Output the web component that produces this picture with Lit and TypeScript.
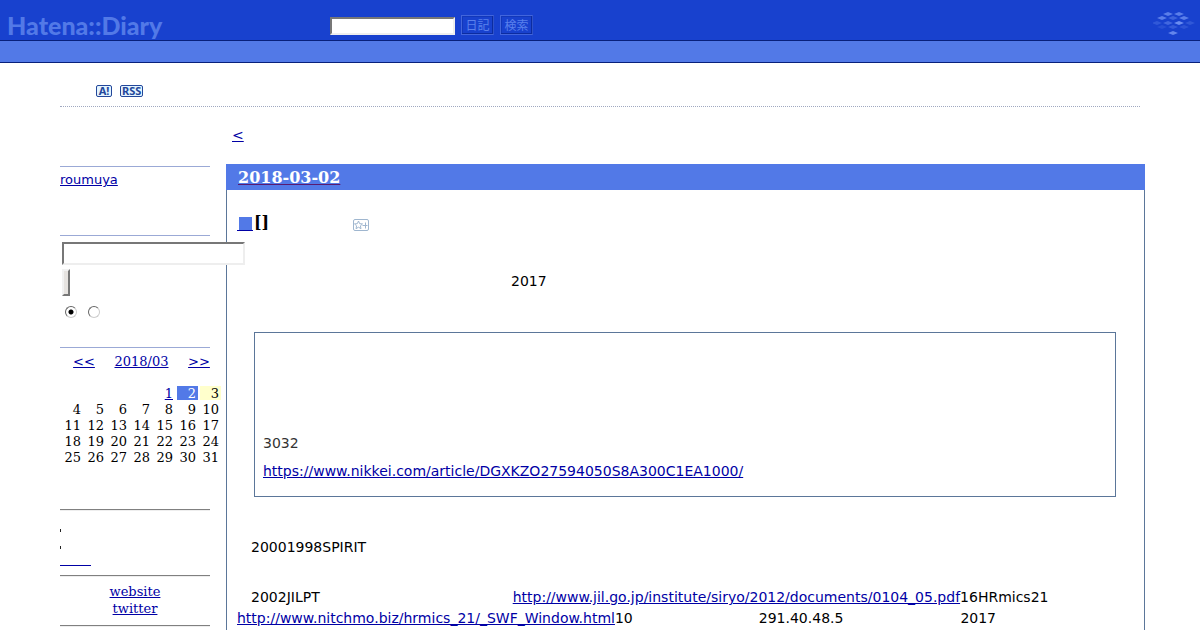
import { LitElement, html, css, svg } from "lit";
import { customElement } from "lit/decorators.js";

const blank = (width: number) => html`<span class="blank" style="width:${width}px"></span>`;

const weeks: number[][] = [
  [0, 0, 0, 0, 1, 2, 3],
  [4, 5, 6, 7, 8, 9, 10],
  [11, 12, 13, 14, 15, 16, 17],
  [18, 19, 20, 21, 22, 23, 24],
  [25, 26, 27, 28, 29, 30, 31],
];

@customElement("diary-header")
class DiaryHeader extends LitElement {
  static styles = css`
    :host { display: block; }
    .bar {
      display: flex;
      align-items: center;
      height: 40px;
      background: #1841ce;
      border-bottom: 1px solid #08207b;
    }
    .logo {
      width: 322px;
      padding: 10px 0 0 7px;
      box-sizing: border-box;
      margin-right: 8px;
      font: 900 25px/30px Lato, sans-serif;
      color: #5279e7;
      text-decoration: none;
    }
    .search { display: flex; align-items: center; gap: 6px; flex: 1; padding-top: 9px; }
    .word {
      box-sizing: border-box;
      width: 125px;
      height: 18px;
      margin: 2px 0 0;
      padding: 0 2px;
      border: 2px solid;
      border-color: #777 #eee #eee #777;
      background: #fff;
      border-radius: 0;
    }
    .go {
      box-sizing: border-box;
      width: 33px;
      height: 20px;
      padding: 0;
      border: 1px solid;
      border-color: #4265dc #3052c8 #4265dc #4265dc;
      box-shadow: inset -1px -1px #0c2ca0, inset 1px 1px #1238ba;
      border-radius: 0;
      background: #1841ce;
      color: #5a80ec;
      font: 12px/15px "Noto Sans CJK JP", sans-serif;
    }
    .mark { margin: 6px 5px 0 0; display: block; }
    .sub { height: 21px; background: #5279e7; border-bottom: 1px solid #08207b; }
  `;
  render() {
    const tiles: [number, number, number][] = [
      [15, 5, 0.8], [26, 5, 0.8],
      [9, 9, 0.8], [20, 9, 0.45], [31, 9, 0.8],
      [4, 14, 0.3], [15, 14, 0.5], [26, 14, 1], [37, 14, 0.3],
      [9, 18, 0.2], [20, 18, 0.35], [31, 18, 0.25],
      [20, 24, 0.9],
    ];
    return html`
      <div class="bar">
        <a class="logo" href="#">Hatena::Diary</a>
        <form class="search">
          <input class="word" type="text" aria-label="検索" />
          <button class="go" type="button">日記</button>
          <button class="go" type="button">検索</button>
        </form>
        <svg class="mark" width="42" height="28" viewBox="0 0 42 28" aria-hidden="true">
          ${tiles.map(([x, y, o]) => svg`<path d="M${x - 5} ${y}l5-2 5 2-5 2z" fill="#6b8df0" opacity=${o}/>`)}
        </svg>
      </div>
      <div class="sub"></div>`;
  }
}

@customElement("diary-sidebar")
class DiarySidebar extends LitElement {
  static styles = css`
    :host { display: block; width: 150px; flex: none; font: 13px/17px "DejaVu Serif", serif; position: relative; z-index: 1; }
    a { color: #0000a5; }
    .module { border-top: 1px solid #9ba9d6; }
    .profile { margin-top: 59px; height: 69px; padding-top: 4px; box-sizing: border-box; font-family: "DejaVu Sans", sans-serif; }
    .find { height: 112px; box-sizing: border-box; padding: 6px 0 0 2px; }
    .query {
      display: block;
      box-sizing: border-box;
      width: 183px;
      height: 23px;
      margin: 0 0 4px;
      padding: 1px 2px;
      border: 2px solid;
      border-color: #777 #eee #eee #777;
      background: #fff;
      border-radius: 0;
    }
    .submit {
      display: block;
      box-sizing: border-box;
      width: 8px;
      height: 27px;
      padding: 0;
      border: 2px solid;
      border-color: #f2f2f2 #777 #777 #f2f2f2;
      border-radius: 0;
      background: #e6e3e0;
    }
    .choice { display: flex; gap: 11px; padding: 10px 3px; }
    .radio {
      appearance: none;
      box-sizing: border-box;
      width: 12px;
      height: 12px;
      margin: 0;
      border: 1px solid;
      border-color: #666 #ccc #ccc #666;
      border-radius: 50%;
      background: #fff;
    }
    .radio:checked { background: radial-gradient(circle, #000 2px, #fff 3px); }
    .month { height: 162px; box-sizing: border-box; padding-top: 4px; }
    .calendar { table-layout: fixed; width: 163px; border-collapse: separate; border-spacing: 2px; line-height: 16px; }
    .calendar th { padding: 0; font-weight: normal; height: 14px; }
    .calendar td { padding: 0 2px 0 0; height: 14px; text-align: right; }
    .calendar .text { display: block; height: 14px; }
    .calendar td.current { background: #5279e7; color: #fff; }
    .calendar td.saturday { background: #ffffcc; }
    .rule { height: 0; margin: 0; border: 0; border-top: 1px solid #808080; border-bottom: 1px solid #eee; }
    .empties { height: 64px; padding-top: 18px; box-sizing: border-box; }
    .tick { display: block; width: 1px; height: 3px; margin-bottom: 14px; background: #222; }
    .void { display: block; width: 31px; height: 2px; border-bottom: 1px solid #0000a5; }
    .links { text-align: center; padding: 6px 0 8px; }
    .links a { display: table; margin: 0 auto; }
  `;
  cell(day: number) {
    if (!day) return html`<td></td>`;
    const state = day === 2 ? "current" : day === 3 ? "saturday" : "";
    return html`<td class=${state}><span class="text">${day === 1 ? html`<a href="#">1</a>` : day}</span></td>`;
  }
  render() {
    return html`
      <div class="module profile"><a href="#">roumuya</a></div>
      <form class="module find">
        <input class="query" type="text" aria-label="search" />
        <button class="submit" type="button" aria-label="search"></button>
        <div class="choice">
          <input class="radio" type="radio" name="scope" aria-label="diary" checked />
          <input class="radio" type="radio" name="scope" aria-label="all" />
        </div>
      </form>
      <div class="module month">
        <table class="calendar">
          <thead>
            <tr>
              <th colspan="2"><span class="text"><a href="#">&lt;&lt;</a></span></th>
              <th colspan="3"><span class="text"><a href="#">2018/03</a></span></th>
              <th colspan="2"><span class="text"><a href="#">&gt;&gt;</a></span></th>
            </tr>
            <tr>${weeks[0].map(() => html`<th></th>`)}</tr>
          </thead>
          <tbody>
            ${weeks.map((week) => html`<tr>${week.map((d) => this.cell(d))}</tr>`)}
          </tbody>
        </table>
      </div>
      <hr class="rule" />
      <div class="empties">
        <span class="tick"></span><span class="tick"></span>
        <a class="void" href="#" aria-label="more"></a>
      </div>
      <hr class="rule" />
      <div class="links"><a href="#">website</a><a href="#">twitter</a></div>
      <hr class="rule" />`;
  }
}

@customElement("diary-entry")
class DiaryEntry extends LitElement {
  static styles = css`
    :host { display: block; flex: 1; min-width: 0; font: 14px/21px "DejaVu Sans", sans-serif; color: #000; }
    a { color: #0000a5; }
    p { margin: 0; white-space: nowrap; }
    .blank { display: inline-block; }
    .pager { padding: 18px 6px; }
    .day { border: 1px solid #5b7699; border-top: 0; }
    .date { margin: 0 -1px; padding: 1px 12px 0; background: #5279e7; font: 700 16px/25px "DejaVu Serif", serif; }
    .date a { color: #fff; text-decoration-color: #5a1a70; }
    .body { padding: 22px 10px; }
    .title { display: flex; align-items: center; margin: 0; font: 700 16px/22px "DejaVu Serif", serif; }
    .anchor { width: 16px; height: 14px; box-sizing: border-box; padding-left: 2px; border-bottom: 1px solid #0000a5; margin: 2px 1px 0 0; }
    .square { display: block; width: 13px; height: 13px; background: #5279e7; }
    .star { margin: 3px 0 0 84px; }
    .lead { margin-top: 37px; }
    .quote { margin: 40px 18px 40px 17px; padding: 100px 8px 14px; border: 1px solid #5b7699; color: #333; }
    .quote p + p { margin-top: 7px; }
    .next { margin-top: 29px; }
  `;
  render() {
    return html`
      <nav class="pager"><a href="#">&lt;</a></nav>
      <article class="day">
        <h2 class="date"><a href="#">2018-03-02</a></h2>
        <div class="body">
          <h3 class="title">
            <a class="anchor" href="#" aria-label="permalink"><span class="square"></span></a>[]
            <svg class="star" width="16" height="12" viewBox="0 0 16 12" fill="none" stroke="#9fb6cf" aria-hidden="true">
              <rect x=".5" y=".5" width="15" height="11" rx="1.5" />
              <path d="M5.5 2l1.2 2.7 2.8.2-2.1 1.9.6 2.9-2.5-1.5L3 9.7l.6-2.9L1.5 4.900l2.800-.2z" />
              <path d="M12.500 3.500v6M9.500 6.500h5" />
            </svg>
          </h3>
          <p class="lead">${blank(274)}2017</p>
          <blockquote class="quote">
            <p>3032</p>
            <p><a href="#">https://www.nikkei.com/article/DGXKZO27594050S8A300C1EA1000/</a></p>
          </blockquote>
          <p>${blank(14)}20001998SPIRIT</p>
          <p class="next">${blank(14)}2002JILPT${blank(193)}<a href="#">http://www.jil.go.jp/institute/siryo/2012/documents/0104_05.pdf</a>16HRmics21</p>
          <p><a href="#">http://www.nitchmo.biz/hrmics_21/_SWF_Window.html</a>10${blank(126)}291.40.48.5${blank(117)}2017</p>
        </div>
      </article>`;
  }
}

@customElement("app-root")
class AppRoot extends LitElement {
  static styles = css`
    :host { display: block; height: 100vh; overflow: hidden; background: #fff; font-family: "DejaVu Sans", sans-serif; }
    .top { display: flex; gap: 8px; margin: 0 60px; padding: 22px 36px 9px; border-bottom: 1px dotted #a0a8c0; }
    .badge {
      box-sizing: border-box;
      min-width: 16px;
      height: 12px;
      padding: 0 1px;
      border: 1px solid #23479a;
      border-radius: 2px;
      background: #e3f4ff;
      color: #23479a;
      font: 700 11px/10px "Noto Sans", sans-serif;
      text-align: center;
      text-decoration: none;
    }
    .columns { display: flex; gap: 16px; margin: 0 55px 0 60px; }
  `;
  render() {
    return html`
      <diary-header></diary-header>
      <div class="top"><a class="badge" href="#">A!</a><a class="badge" href="#">RSS</a></div>
      <div class="columns">
        <diary-sidebar></diary-sidebar>
        <diary-entry></diary-entry>
      </div>`;
  }
}
